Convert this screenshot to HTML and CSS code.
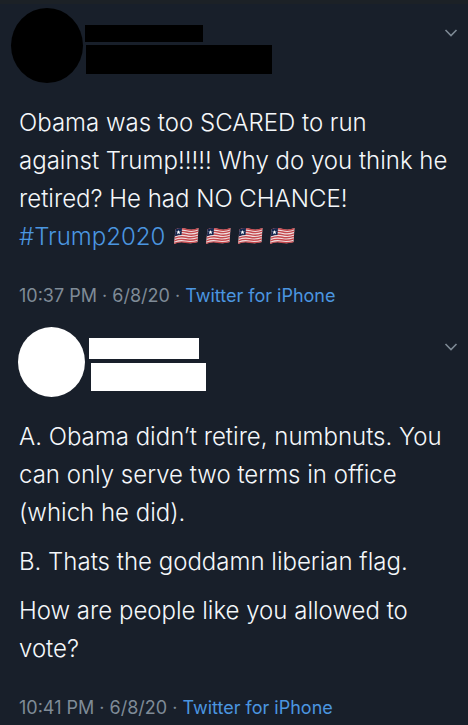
FILE: index.html
```html
<!DOCTYPE html>
<html lang="en">
<head>
<meta charset="utf-8">
<meta name="viewport" content="width=device-width, initial-scale=1">
<title>Thread</title>
<link rel="stylesheet" href="styles.css">
</head>
<body>
<svg class="defs" aria-hidden="true">
  <symbol id="flag" viewBox="0 0 25 18">
    <path fill="#f0dfe0" d="M2 2.500Q7 0 13 2T25 1L24 15Q18 17 12 15.500T.5 17Z"/>
    <g fill="none" stroke="#c4484d" stroke-width="1.400">
      <path d="M2 3Q7 .8 13 2.500T25 1.700"/>
      <path d="M1.800 5.800Q7 3.400 13 5T24.800 4.200"/>
      <path d="M1.500 8.500Q7 6 13 7.600T24.600 6.800"/>
      <path d="M1.200 11.200Q7 8.800 12.500 10.200T24.400 9.400"/>
      <path d="M.9 13.800Q6.500 11.600 12 12.800T24.200 12"/>
      <path d="M.6 16.400Q6 14.200 12 15.200T24 14.600"/>
    </g>
    <path fill="#14284f" d="M2 2.300Q5 1 8.500 1L8 8Q4.500 8 1.500 9.300Z"/>
    <path fill="#fff" d="M5 3L5.600 4.500 7.200 4.600 6 5.600 6.400 7.200 5 6.300 3.600 7.200 4 5.600 2.800 4.600 4.400 4.500Z"/>
  </symbol>
  <symbol id="chevron" viewBox="0 0 14 10">
    <path fill="none" stroke="#7d8994" stroke-width="1.600" d="M1.500 2L7 7.500 12.500 2"/>
  </symbol>
</svg>
<main class="thread">
  <article class="tweet">
    <header class="head head-dark">
      <span class="avatar"></span>
      <div class="names"><span class="name"></span><span class="handle"></span></div>
      <button class="more" type="button" aria-label="More"><svg><use href="#chevron"/></svg></button>
    </header>
    <div class="body">
      <p>Obama was too SCARED to run<br>against Trump!!!!! Why do you think he retired? He had NO CHANCE!<br><a href="#">#Trump2020</a><span class="flags" role="img" aria-label="Liberian flags"><svg><use href="#flag"/></svg><svg><use href="#flag"/></svg><svg><use href="#flag"/></svg><svg><use href="#flag"/></svg></span></p>
    </div>
    <footer class="meta">10:37 PM · 6/8/20 · <a href="#">Twitter for iPhone</a></footer>
  </article>
  <article class="tweet">
    <header class="head head-light">
      <span class="avatar"></span>
      <div class="names"><span class="name"></span><span class="handle"></span></div>
      <button class="more" type="button" aria-label="More"><svg><use href="#chevron"/></svg></button>
    </header>
    <div class="body">
      <p>A. Obama didn’t retire, numbnuts. You can only serve two terms in office (which he did).</p>
      <p>B. Thats the goddamn liberian flag.</p>
      <p>How are people like you allowed to vote?</p>
    </div>
    <footer class="meta">10:41 PM · 6/8/20 · <a href="#">Twitter for iPhone</a></footer>
  </article>
</main>
</body>
</html>
```
FILE: styles.css
```css
* { box-sizing: border-box; }
body {
  margin: 0;
  background: #181f2a;
  color: #f4f7fa;
  font-family: Inter, "Liberation Sans", sans-serif;
  font-weight: 300;
}
a { color: #4b96e0; text-decoration: none; }
.defs { position: absolute; width: 0; height: 0; }
.thread {
  display: flex;
  flex-direction: column;
  gap: 19px;
  padding-top: 4px;
  padding-bottom: 4px;
  border-top: 4px solid #1c2126;
}
.head { display: flex; align-items: flex-start; margin-bottom: 21px; }
.avatar { flex: none; border-radius: 50%; }
.names { display: flex; flex-direction: column; align-items: flex-start; }
.name, .handle { display: block; }
.more {
  margin-left: auto;
  margin-right: 10px;
  padding: 0;
  border: 0;
  background: none;
}
.more svg { display: block; width: 14px; height: 10px; }

.head-dark { padding-left: 11px; }
.head-dark .avatar { width: 72px; height: 75px; background: #000; }
.head-dark .names { margin: 17px 0 0 2px; gap: 3px; }
.head-dark .name { width: 118px; height: 17px; background: #000; }
.head-dark .handle { width: 186px; height: 29px; margin-left: 1px; background: #000; }
.head-dark .more { margin-top: 20px; }

.head-light { padding-left: 18px; }
.head-light .avatar { width: 67px; height: 70px; background: #fff; }
.head-light .names { margin: 11px 0 0 4px; gap: 4px; }
.head-light .name { width: 110px; height: 21px; background: #fff; }
.head-light .handle { width: 115px; height: 28px; margin-left: 2px; background: #fff; }
.head-light .more { margin-top: 15px; }

.body {
  display: flex;
  flex-direction: column;
  gap: 11px;
  padding: 0 8px 0 19px;
  font-size: 24px;
  line-height: 38px;
}
.body p { margin: 0; }
.flags { display: inline-flex; gap: 6px; margin-left: 8px; }
.flags svg { width: 26px; height: 18px; }
.meta {
  margin-top: 28px;
  padding: 0 19px;
  color: #7f8b97;
  font-size: 18px;
  font-weight: 400;
  line-height: 24px;
}
```
